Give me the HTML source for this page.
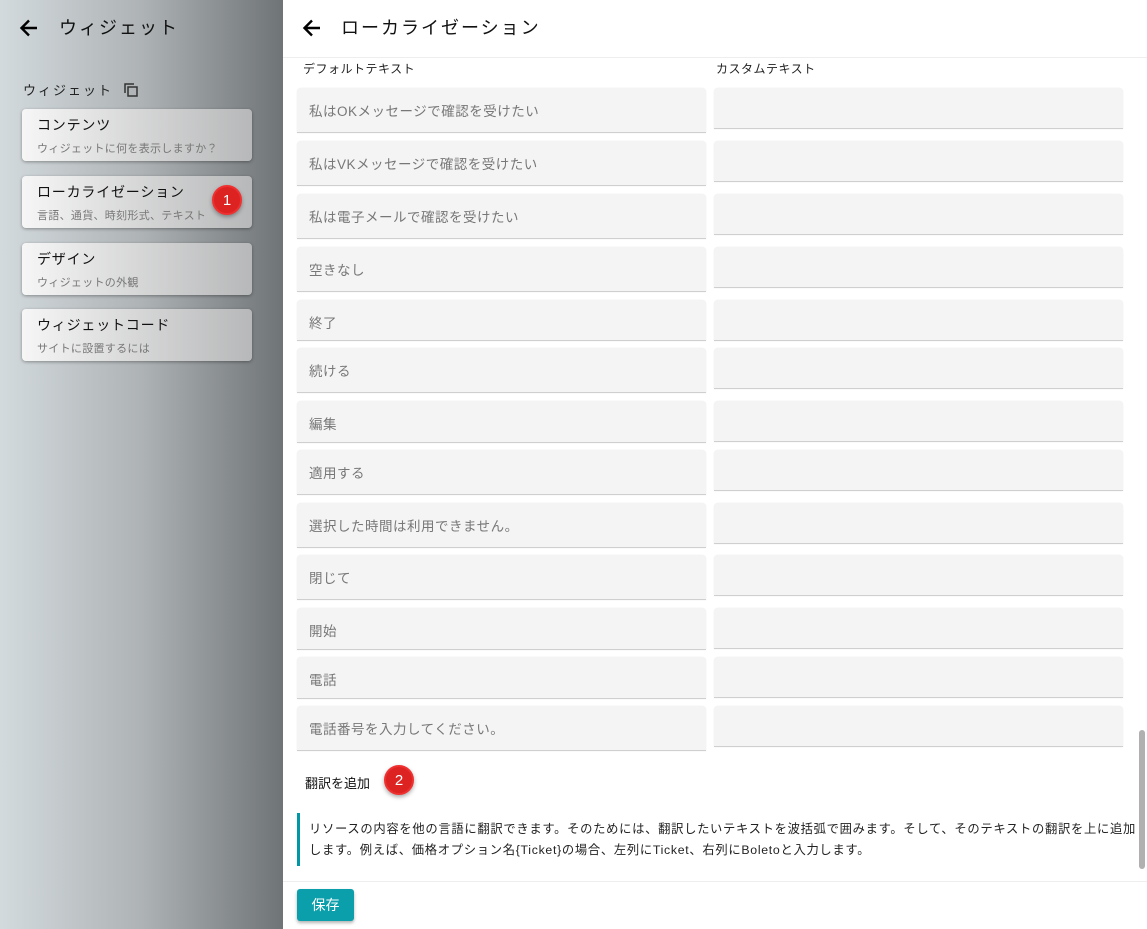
<!DOCTYPE html>
<html><head><meta charset="utf-8"><style>
*{box-sizing:border-box;margin:0;padding:0}
body{width:1147px;height:929px;overflow:hidden;position:relative;font-family:"Liberation Sans","Noto Sans CJK JP",sans-serif;background:#fff;color:#222}
#left{position:absolute;left:0;top:0;width:283px;height:929px;background:linear-gradient(90deg,#d3dadd 0%,#aeb3b5 50%,#6f7476 100%)}
.abs{position:absolute}
.card{position:absolute;left:22px;width:230px;height:52px;border-radius:4px;background:linear-gradient(90deg,#f6f6f6,#b7b8b9);box-shadow:0 1px 3px rgba(0,0,0,.35)}
.card .t{position:absolute;left:15px;top:6px;font-size:14px;color:#111;letter-spacing:.8px}
.card .s{position:absolute;left:15px;top:31px;font-size:11px;color:#777;letter-spacing:.3px}
.badge{position:absolute;width:30px;height:30px;border-radius:50%;background:#dd2222;border:2px solid #f03030;color:#fff;font-size:15px;text-align:center;line-height:28px;box-shadow:0 2px 4px rgba(0,0,0,.35)}
.lf{position:absolute;left:297px;width:409px;background:#f4f4f4;border-radius:4px 4px 0 0;border-bottom:1px solid #cfcfcf;box-shadow:0 0 1px rgba(0,0,0,.12);font-size:13.5px;color:#777;padding:12px 0 0 12px;letter-spacing:.5px}
.rf{position:absolute;left:714px;width:409px;height:41px;background:#f4f4f4;border-radius:4px 4px 0 0;border-bottom:1px solid #cfcfcf;box-shadow:0 0 1px rgba(0,0,0,.12)}
</style></head><body>
<div id="left">
<svg class="abs" style="left:17px;top:16px" width="24" height="24" viewBox="0 0 24 24"><path d="M20 12H5M12 4.5L4.5 12 12 19.5" stroke="#000" stroke-width="2.4" fill="none"/></svg>
<div class="abs" style="left:59px;top:14px;font-size:18px;letter-spacing:2px;color:#111">ウィジェット</div>
<div class="abs" style="left:23px;top:80px;font-size:13px;letter-spacing:2px;color:#222">ウィジェット</div>
<svg class="abs" style="left:124px;top:83px" width="14" height="14" viewBox="0 0 14 14"><rect x="4" y="4" width="9" height="9" fill="none" stroke="#333" stroke-width="1.5"/><path d="M1 10V1h9" fill="none" stroke="#333" stroke-width="1.5"/></svg>
<div class="card" style="top:109px"><div class="t">コンテンツ</div><div class="s">ウィジェットに何を表示しますか？</div></div>
<div class="card" style="top:176px"><div class="t">ローカライゼーション</div><div class="s">言語、通貨、時刻形式、テキスト</div></div>
<div class="badge" style="left:212px;top:185px">1</div>
<div class="card" style="top:243px"><div class="t">デザイン</div><div class="s">ウィジェットの外観</div></div>
<div class="card" style="top:309px"><div class="t">ウィジェットコード</div><div class="s">サイトに設置するには</div></div>
</div>
<svg class="abs" style="left:300px;top:16px" width="24" height="24" viewBox="0 0 24 24"><path d="M20 12H5M12 4.5L4.5 12 12 19.5" stroke="#000" stroke-width="2.4" fill="none"/></svg>
<div class="abs" style="left:341px;top:14px;font-size:18px;letter-spacing:2px;color:#111">ローカライゼーション</div>
<div class="abs" style="left:283px;top:57px;width:864px;height:1px;background:#eee"></div>
<div class="abs" style="left:303px;top:60px;font-size:12px;color:#222;letter-spacing:.5px">デフォルトテキスト</div>
<div class="abs" style="left:716px;top:60px;font-size:12px;color:#222;letter-spacing:.5px">カスタムテキスト</div>

<div class="lf" style="top:88px;height:45px">私はOKメッセージで確認を受けたい</div><div class="rf" style="top:88px"></div>
<div class="lf" style="top:141px;height:45px">私はVKメッセージで確認を受けたい</div><div class="rf" style="top:141px"></div>
<div class="lf" style="top:194px;height:45px">私は電子メールで確認を受けたい</div><div class="rf" style="top:194px"></div>
<div class="lf" style="top:247px;height:45px">空きなし</div><div class="rf" style="top:247px"></div>
<div class="lf" style="top:300px;height:41px">終了</div><div class="rf" style="top:300px"></div>
<div class="lf" style="top:348px;height:45px">続ける</div><div class="rf" style="top:348px"></div>
<div class="lf" style="top:401px;height:42px">編集</div><div class="rf" style="top:401px"></div>
<div class="lf" style="top:450px;height:45px">適用する</div><div class="rf" style="top:450px"></div>
<div class="lf" style="top:503px;height:45px">選択した時間は利用できません。</div><div class="rf" style="top:503px"></div>
<div class="lf" style="top:555px;height:45px">閉じて</div><div class="rf" style="top:555px"></div>
<div class="lf" style="top:608px;height:42px">開始</div><div class="rf" style="top:608px"></div>
<div class="lf" style="top:657px;height:42px">電話</div><div class="rf" style="top:657px"></div>
<div class="lf" style="top:706px;height:45px">電話番号を入力してください。</div><div class="rf" style="top:706px"></div>

<div class="abs" style="left:305px;top:773px;font-size:13px;color:#111">翻訳を追加</div>
<div class="badge" style="left:384px;top:765px">2</div>
<div class="abs" style="left:297px;top:813px;width:3px;height:53px;background:#0097a7"></div>
<div class="abs" style="left:309px;top:819px;width:840px;font-size:12.3px;line-height:21px;color:#222;letter-spacing:.7px;white-space:nowrap">リソースの内容を他の言語に翻訳できます。そのためには、翻訳したいテキストを波括弧で囲みます。そして、そのテキストの翻訳を上に追加<br>します。例えば、価格オプション名{Ticket}の場合、左列にTicket、右列にBoletoと入力します。</div>

<div class="abs" style="left:1139px;top:730px;width:6px;height:139px;background:#b0b0b0;border-radius:3px"></div>
<div class="abs" style="left:283px;top:881px;width:864px;height:1px;background:#eee"></div>
<div class="abs" style="left:297px;top:889px;width:57px;height:32px;background:#0a9fab;border-radius:3px;color:#fff;font-size:14px;text-align:center;line-height:32px;box-shadow:0 2px 3px rgba(0,0,0,.3)">保存</div>
</body></html>
